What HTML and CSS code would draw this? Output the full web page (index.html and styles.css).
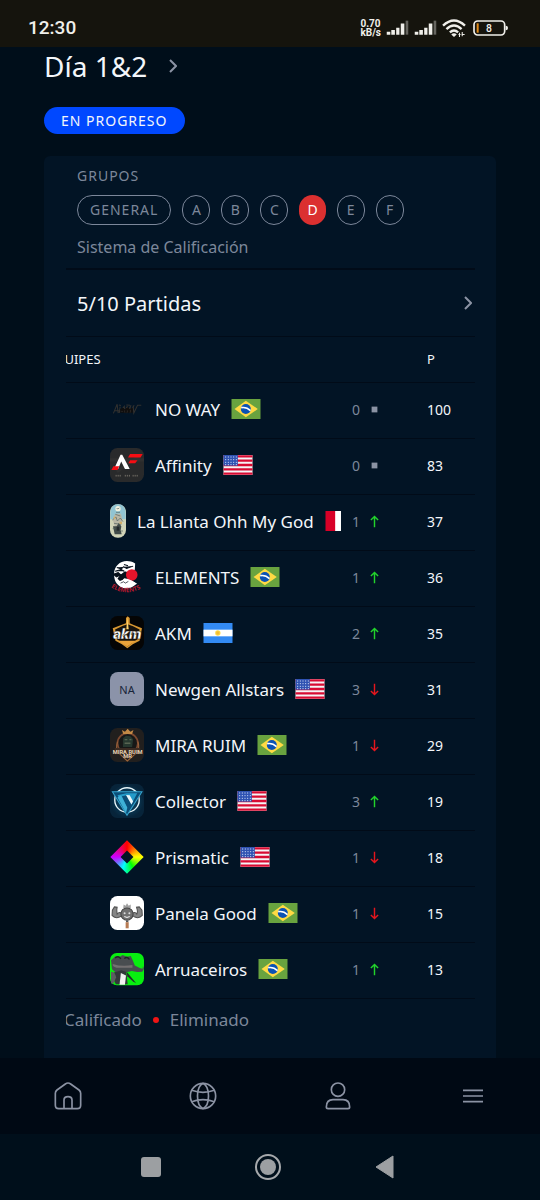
FILE: index.html
```html
<!DOCTYPE html>
<html lang="es">
<head>
<meta charset="utf-8">
<meta name="viewport" content="width=device-width, initial-scale=1">
<title>Día 1&amp;2</title>
<link rel="stylesheet" href="styles.css">
</head>
<body>
<svg class="defs" aria-hidden="true">
  <defs>
    <symbol id="br" viewBox="0 0 87 60"><path fill="#69a33f" d="M0 0h87v60H0z"/><path fill="#ffda44" d="M43 5 79 30 43 55 9 30z"/><circle cx="43" cy="30" r="15" fill="#0b52b4"/><path d="M29 26q16-3 28 9" fill="none" stroke="#fff" stroke-width="5"/></symbol>
    <symbol id="us" viewBox="0 0 87 60"><path fill="#f5f3f5" d="M0 0h87v60H0z"/><path d="M0 4h87M0 17h87M0 30h87M0 43h87M0 56h87" stroke="#d80b32" stroke-width="7"/><path fill="#2e52b2" d="M0 0h43v32H0z"/><path d="M5 6h36M5 14h36M5 22h36M5 29h36" stroke="#dce5fa" stroke-width="3" stroke-dasharray="3 5"/></symbol>
    <symbol id="ar" viewBox="0 0 87 60"><path fill="#338af3" d="M0 0h87v60H0z"/><path fill="#fff" d="M0 20h87v20H0z"/><circle cx="43" cy="30" r="8" fill="#ffda44"/><circle cx="43" cy="30" r="5" fill="#f5bb36"/></symbol>
    <symbol id="pe" viewBox="0 0 87 60"><path fill="#d80027" d="M0 0h87v60H0z"/><path fill="#fff" d="M29 0h29v60H29z"/></symbol>
    <symbol id="up" viewBox="0 0 24 36"><path d="M12 34V4M2 14 12 4l10 10" fill="none" stroke="#22d32b" stroke-width="4"/></symbol>
    <symbol id="down" viewBox="0 0 24 36"><path d="M12 2v30M2 22l10 10 10-10" fill="none" stroke="#e5161d" stroke-width="4"/></symbol>
    <symbol id="same" viewBox="0 0 24 36"><path d="M4 10h16v16H4z" fill="#8b93a4"/></symbol>
    <symbol id="chevron" viewBox="0 0 8 14"><path d="m1 1 6 6-6 6" fill="none" stroke="currentColor" stroke-width="2"/></symbol>
    <symbol id="signal" viewBox="0 0 68 46"><path d="M1 36h11v9H1zM15 31h11v14H15zM30 24h10v21H30zM44 11h11v34H44z" fill="#f0efea"/><path d="M59 2h8v43h-8z" fill="#66655f"/></symbol>
  </defs>
</svg>

<header class="status">
  <time class="clock">12:30</time>
  <div class="indicators">
    <div class="speed"><span>0.70</span><span>kB/s</span></div>
    <svg class="signal"><use href="#signal"/></svg>
    <svg class="signal"><use href="#signal"/></svg>
    <svg class="wifi" viewBox="0 0 70 52" fill="none" stroke="#f0efea" stroke-width="7"><path d="M3 19q32-30 64 0M13 29q22-20 44 0M23 39q12-11 24 0"/><path d="m27 45 8 7 8-7q-8-7-16 0z" fill="#f0efea" stroke="none"/><path d="M51 40v12M59 38v12M48 45h6M57 45h9" stroke-width="3"/></svg>
    <svg class="battery" viewBox="0 0 105 48"><rect x="3" y="3" width="92" height="42" rx="11" fill="none" stroke="#f0efea" stroke-width="5"/><path d="M98 17q7 0 7 7t-7 7z" fill="#f0efea"/><path d="M11 10h6v28h-6z" fill="#e18a18"/><text x="48" y="35" class="battery-level">8</text></svg>
  </div>
</header>

<main class="page">
  <h1 class="title"><button class="title-button">Día 1&amp;2 <svg class="chevron-title"><use href="#chevron"/></svg></button></h1>
  <span class="badge">EN PROGRESO</span>

  <section class="card">
    <div class="groups">
      <h2 class="label">GRUPOS</h2>
      <div class="chips">
        <button class="chip">GENERAL</button>
        <button class="chip">A</button>
        <button class="chip">B</button>
        <button class="chip">C</button>
        <button class="chip active" aria-pressed="true">D</button>
        <button class="chip">E</button>
        <button class="chip">F</button>
      </div>
      <p class="system">Sistema de Calificación</p>
    </div>
    <button class="matches">5/10 Partidas <svg class="chevron-row"><use href="#chevron"/></svg></button>

    <div class="scroller">
      <table class="standings">
        <colgroup><col><col class="col-change"><col class="col-points"></colgroup>
        <thead><tr><th scope="col">EQUIPES</th><th></th><th scope="col">P</th></tr></thead>
        <tbody>
          <tr><td><div class="team">
            <svg class="logo" viewBox="0 0 100 100"><g fill="none" stroke="#32312f" stroke-width="3"><path d="m10 63 11-27 3 26M13 55h14M30 43l-3 18 15-19 2 19 5-18M52 42l-3 20 13-23M60 40l-2 22 13-23M68 40l2 22 11-23h11M26 38l6 2M48 38l11 1"/></g><path d="m30 50 8-4 5 5 9-6 6 5 9-4v15H30z" fill="#100e0d"/><path d="M33 57h5M43 54v6M51 54v6M60 52v8" stroke="#32312f" stroke-width="2"/></svg>
            <span>NO WAY</span><svg class="flag"><use href="#br"/></svg></div></td>
            <td><div class="change">0<svg class="trend"><use href="#same"/></svg></div></td><td>100</td></tr>
          <tr><td><div class="team">
            <svg class="logo" viewBox="0 0 100 100"><rect width="100" height="100" rx="22" fill="#292a2b"/><path d="M0 35h100M20 70l70-50" stroke="#303030" stroke-width="9"/><path d="M31 20 12 62h12l9-22 11 22h14L36 20z" fill="#fff"/><path d="M59 18h37l-6 10H53zM59 36h22l-7 9H54zM10 54h17l-5 11H4z" fill="#f50d13"/><path d="M18 79v5M24 79v5M30 79v5M45 79v5M51 79v5M57 79v5M68 79v5M74 79v5M80 79v5" stroke="#968f83" stroke-width="2"/></svg>
            <span>Affinity</span><svg class="flag"><use href="#us"/></svg></div></td>
            <td><div class="change">0<svg class="trend"><use href="#same"/></svg></div></td><td>83</td></tr>
          <tr><td><div class="team">
            <svg class="logo board" viewBox="0 0 48 100"><rect width="48" height="100" rx="23" fill="#d0d3b7"/><path d="M1 28Q1 0 24 0t23 28v17H1z" fill="#91c4d2"/><circle cx="24" cy="13" r="8" fill="#f2f1df"/><path d="M15 28h18l4 19-8 26H16l-7-25z" fill="#b9b7a6"/><path d="M9 66h11l6-10 8 10-2 12 3 12H14z" fill="#414b49"/><path d="m7 47 11-9 4 12 9-9 8 11M16 30l15 5M12 57l22 3M18 24h12M8 73h8M33 80h6M20 11l3 3 5-3" stroke="#51605f" stroke-width="2" fill="none"/><path d="M11 37h5v7h-5zM29 52h7v7h-7z" fill="#d3ae68"/><path d="M20 67h8v12h-8z" fill="#22272b"/></svg>
            <span>La Llanta Ohh My God</span><svg class="flag"><use href="#pe"/></svg></div></td>
            <td><div class="change">1<svg class="trend"><use href="#up"/></svg></div></td><td>37</td></tr>
          <tr><td><div class="team">
            <svg class="logo" viewBox="0 0 100 100"><path d="M74 10C43-8 11 11 12 43c0 23 12 36 32 41 18-1 27-6 33-15L60 58 33 43l25-8 15-6z" fill="#fff"/><path d="m20 22 13 4 7-6 9 5 19-7M10 42l14-5 8 7-13 6zM15 33l18-5 9 5M41 13l12 4" fill="#07101b" stroke="#07101b" stroke-width="3"/><path d="M22 55l7-10 14-11q9-2 17 8l3 15-12 4-10-4-12 5z" fill="#07101b"/><circle cx="64" cy="44" r="17" fill="#e6142b"/><path d="m22 70 13-9 7-7 11 2 12 5 15 9-13 6H35z" fill="#fff"/><path d="m31 68 9-4 5 4 9-5" fill="none" stroke="#07101b" stroke-width="2"/><path id="arc" d="M3 80q46 30 94 0" fill="none"/><text class="logo-elements" fill="#b8182e"><textPath href="#arc">ELEMENTS</textPath></text></svg>
            <span>ELEMENTS</span><svg class="flag"><use href="#br"/></svg></div></td>
            <td><div class="change">1<svg class="trend"><use href="#up"/></svg></div></td><td>36</td></tr>
          <tr><td><div class="team">
            <svg class="logo" viewBox="0 0 100 100"><rect width="100" height="100" rx="22" fill="#050505"/><path d="m8 36 27-10 12-5V6l5-5 6 5v15l10 5 26 10-7 37-20 10-16 12-16-12-19-10z" fill="#d99832"/><path d="m15 40 23-11 14-5 16 6 19 10-5 28-15 10-16 12-14-11-16-10z" fill="#17120c"/><path d="m51 3-3 36h7z" fill="#ffd36b"/><path d="M25 73h54L64 81l-13 9-15-9z" fill="#eba33a"/><text x="51" y="67" class="logo-akm">akm</text></svg>
            <span>AKM</span><svg class="flag"><use href="#ar"/></svg></div></td>
            <td><div class="change">2<svg class="trend"><use href="#up"/></svg></div></td><td>35</td></tr>
          <tr><td><div class="team">
            <span class="logo initials">NA</span>
            <span>Newgen Allstars</span><svg class="flag"><use href="#us"/></svg></div></td>
            <td><div class="change">3<svg class="trend"><use href="#down"/></svg></div></td><td>31</td></tr>
          <tr><td><div class="team">
            <svg class="logo" viewBox="0 0 100 100"><rect width="100" height="100" rx="22" fill="#211f1e"/><circle cx="52" cy="45" r="30" fill="#171817" stroke="#7c4930" stroke-width="5"/><path d="m35 6 9 5 8-9 8 9 9-5-4 12H39z" fill="#c48a46"/><path d="m38 30 9-7 13 1 8 9-3 23H38z" fill="#27382f"/><path d="M43 34h8M57 34h6M43 45h17" stroke="#586451" stroke-width="4"/><path d="M22 40q-7 22 4 34l25 23 26-23q12-15 5-34" fill="none" stroke="#9d653b" stroke-width="3"/><path d="M14 59h75v18H67L52 92 38 77H14z" fill="#3b2b22"/><text x="52" y="75" class="logo-mira">MIRA RUIM</text><text x="52" y="89" class="logo-mira">MR</text></svg>
            <span>MIRA RUIM</span><svg class="flag"><use href="#br"/></svg></div></td>
            <td><div class="change">1<svg class="trend"><use href="#down"/></svg></div></td><td>29</td></tr>
          <tr><td><div class="team">
            <svg class="logo" viewBox="0 0 100 100"><defs><radialGradient id="glow"><stop stop-color="#0c557a"/><stop offset="1" stop-color="#07243a"/></radialGradient></defs><rect width="100" height="100" rx="22" fill="url(#glow)"/><circle cx="50" cy="47" r="36" fill="none" stroke="#e7f5f9" stroke-width="4"/><path d="M7 23h87L50 92z" fill="#0b4f78" stroke="#35a5cf" stroke-width="3"/><path d="m22 33 22 37 6-1-15-33 14-3 14 27 17-33H48z" fill="#249bc9"/><path d="m47 32 11 1 10 18-5 9z" fill="#eaf7fb"/><path d="m32 33 19 37-4 15-25-45z" fill="#3fb1d6"/></svg>
            <span>Collector</span><svg class="flag"><use href="#us"/></svg></div></td>
            <td><div class="change">3<svg class="trend"><use href="#up"/></svg></div></td><td>19</td></tr>
          <tr><td><div class="team">
            <span class="logo prism"></span>
            <span>Prismatic</span><svg class="flag"><use href="#us"/></svg></div></td>
            <td><div class="change">1<svg class="trend"><use href="#down"/></svg></div></td><td>18</td></tr>
          <tr><td><div class="team">
            <svg class="logo" viewBox="0 0 100 100"><rect width="100" height="100" rx="22" fill="#fff"/><path d="m39 35 1-10 6 4 4-8 5 8 6-4v11z" fill="#a0a0a0"/><path d="M35 50q-9-4-14 3-1-8-1-13l1-7-8-1-6 10-1 15q8 10 22 5l10-5M66 50q9-4 13 3 3-7 1-13l-2-7 8-1 8 10 1 15q-9 10-22 5l-8-5" fill="#868686" stroke="#505050" stroke-width="3"/><circle cx="50" cy="53" r="18" fill="#707070" stroke="#444" stroke-width="3"/><circle cx="43" cy="51" r="3" fill="#ddd"/><circle cx="57" cy="51" r="3" fill="#ddd"/><path d="m42 60 8 3 8-3" stroke="#eee" stroke-width="3" fill="none"/><path d="M47 72h7v5h-7z" fill="#555"/><path d="M46 77h9v18h-9z" fill="#b77a52"/></svg>
            <span>Panela Good</span><svg class="flag"><use href="#br"/></svg></div></td>
            <td><div class="change">1<svg class="trend"><use href="#down"/></svg></div></td><td>15</td></tr>
          <tr><td><div class="team">
            <svg class="logo" viewBox="0 0 100 100"><rect y="3" width="100" height="95" rx="20" fill="#08ee10"/><path d="M3 24 17 12l12 2 8-5 13 5 11-2 7 15 5 13 16 8 7 1 1-8 3 8-5 9-15 1-16-3-25 6-22-2-11-9z" fill="#494d50"/><path d="M15 18q9-9 17 2M42 19q9-7 15 3" fill="none" stroke="#1d2424" stroke-width="4"/><path d="M8 35q28 9 58 3v8H19Q6 43 8 35z" fill="#747071"/><path d="m12 60 22-6 14 5 4 36H17L9 78z" fill="#313739"/><path d="m32 62 15 7-3 27H28z" fill="#f1f1f1"/><path d="m49 58 28 34-9-5-17-16z" fill="#252a2d"/><path d="M3 58q12-1 15 17L10 93H3z" fill="#5b5e60"/></svg>
            <span>Arruaceiros</span><svg class="flag"><use href="#br"/></svg></div></td>
            <td><div class="change">1<svg class="trend"><use href="#up"/></svg></div></td><td>13</td></tr>
        </tbody>
      </table>
      <ul class="legend"><li class="qualified">Calificado</li><li class="eliminated">Eliminado</li></ul>
    </div>
  </section>
</main>

<nav class="tabs">
  <a href="#" aria-label="Inicio"><svg viewBox="0 0 84 84"><path d="M4 34q0-6 5-10L34 6q8-6 16 0l25 18q5 4 5 10v36q0 10-10 10H14Q4 80 4 70zM30 80V54q0-10 12-10t12 10v26"/></svg></a>
  <a href="#" aria-label="Explorar"><svg viewBox="0 0 84 84"><circle cx="42" cy="42" r="38"/><path d="M42 4C20 15 20 69 42 80M42 4c22 11 22 65 0 76M8 25q34 12 68 0M8 59q34-12 68 0"/></svg></a>
  <a href="#" aria-label="Perfil"><svg viewBox="0 0 84 84"><circle cx="42" cy="23" r="20"/><path d="M7 75q0-22 20-22h30q20 0 20 22 0 5-5 5H12q-5 0-5-5z"/></svg></a>
  <a href="#" aria-label="Menú"><svg viewBox="0 0 84 84"><path d="M12 25h60M12 42h60M12 59h60"/></svg></a>
</nav>
<div class="system-keys">
  <button aria-label="Recientes"><svg viewBox="0 0 28 28"><rect x="4" y="4" width="20" height="20" rx="3" fill="#9c9fa2"/></svg></button>
  <button aria-label="Pantalla de inicio"><svg viewBox="0 0 28 28"><circle cx="14" cy="14" r="12" fill="none" stroke="#a6a9ac" stroke-width="2"/><circle cx="14" cy="14" r="8" fill="#9c9fa2"/></svg></button>
  <button aria-label="Atrás"><svg viewBox="0 0 28 28"><path d="M5 14 22 3v22z" fill="#9c9fa2" stroke="#9c9fa2" stroke-width="1" stroke-linejoin="round"/></svg></button>
</div>
</body>
</html>
```
FILE: styles.css
```css
* { box-sizing: border-box; }
body {
  margin: 0;
  min-height: 100vh;
  display: flex;
  flex-direction: column;
  background: #000e1a;
  color: #f3f6fa;
  font-family: "Noto Sans", sans-serif;
  font-size: 14px;
}
svg { display: block; flex: none; }
button { border: 0; padding: 0; background: none; color: inherit; font: inherit; cursor: pointer; }
.defs { position: absolute; width: 0; height: 0; }

.status {
  display: flex;
  align-items: center;
  justify-content: space-between;
  height: 47px;
  padding: 8px 32px 0 28px;
  background: #15140d;
  color: #f0efea;
  font-family: Roboto, sans-serif;
}
.clock { font-size: 19px; font-weight: 500; }
.indicators { display: flex; align-items: center; gap: 5px; }
.speed { display: flex; flex-direction: column; font-size: 10px; font-weight: 700; line-height: 9px; }
.signal { width: 23px; height: 15px; }
.wifi { width: 24px; height: 18px; }
.battery { width: 35px; height: 16px; margin-left: 2px; }
.battery-level { font-size: 31px; font-weight: 500; fill: #f0efea; text-anchor: middle; }

.page { flex: 1; display: flex; flex-direction: column; align-items: flex-start; padding: 0 44px; }
.title { margin: 0; font-size: 28px; font-weight: 400; line-height: 38px; }
.title-button { display: flex; align-items: center; gap: 22px; }
.chevron-title { width: 8px; height: 14px; color: #8b93a4; }
.badge {
  margin-top: 22px;
  padding: 0 18px 0 17px;
  border-radius: 14px;
  background: #0048ff;
  line-height: 27px;
  letter-spacing: 1px;
}
.card {
  flex: 1;
  align-self: stretch;
  margin-top: 22px;
  padding: 8px 21px 0 22px;
  border-radius: 6px 6px 0 0;
  background: #021425;
}
.groups { padding: 0 11px 10px; border-bottom: 2px solid #010b18; color: #7c879a; }
.label { margin: 0; font-size: 14px; font-weight: 400; line-height: 24px; letter-spacing: 1px; }
.chips { display: flex; gap: 11px; margin-top: 7px; }
.chip {
  min-width: 28px;
  height: 30px;
  padding: 0 8px 2px;
  border: 1px solid #7c879a;
  border-radius: 15px;
}
.chip:first-child { padding: 0 12px 2px; letter-spacing: 1px; }
.chip.active { min-width: 26px; border: 0; background: #db3030; color: #fff; }
.system { margin: 11px 0 0; font-size: 16px; line-height: 22px; }
.matches {
  display: flex;
  align-items: center;
  justify-content: space-between;
  width: 100%;
  height: 67px;
  padding: 0 3px 0 11px;
  border-bottom: 1px solid #010b18;
  font-size: 20px;
}
.chevron-row { width: 8px; height: 14px; color: #8b93a4; }

.scroller { overflow: hidden; }
.standings { width: calc(100% + 28px); margin-left: -28px; table-layout: fixed; border-collapse: collapse; }
.col-change { width: 75px; }
.col-points { width: 59px; }
.standings th, .standings td { padding: 0 0 2px 11px; border-bottom: 1px solid #010b18; text-align: left; font-weight: 400; }
.standings th { height: 45px; padding-bottom: 0; font-size: 13px; }
.standings th:first-child { padding-left: 9px; }
.standings td { height: 56px; }
.standings td:first-child { padding-left: 72px; }
.team { display: flex; align-items: center; gap: 11px; overflow: hidden; font-size: 17px; white-space: nowrap; }
.logo { width: 34px; height: 34px; flex: none; }
.board { width: 16px; }
.initials {
  display: flex;
  align-items: center;
  justify-content: center;
  border-radius: 8px;
  background: #8b93a9;
  color: #172338;
  font-size: 11px;
}
.prism {
  background: conic-gradient(#f00, #ff0 90deg, #0f0 150deg, #0ff 200deg, #c0f 270deg, #f00);
  clip-path: polygon(evenodd, 50% 1%, 99% 50%, 50% 99%, 1% 50%, 50% 1%, 50% 31%, 31% 50%, 50% 69%, 69% 50%, 50% 31%);
}
.flag { width: 30px; height: 20px; }
.logo-elements { font-size: 18px; font-weight: 700; }
.logo-akm { font: italic 900 44px Roboto, sans-serif; fill: #fff; stroke: #211507; stroke-width: 1px; text-anchor: middle; }
.logo-mira { font: 700 17px Roboto, sans-serif; fill: #e3d1b5; text-anchor: middle; }
.change { display: flex; align-items: center; gap: 10px; color: #7c879a; }
.trend { width: 9px; height: 13px; }
.legend { display: flex; gap: 11px; margin: 0 0 0 -19px; padding: 9px 0 0; list-style: none; color: #7c879a; font-size: 17px; line-height: 24px; }
.legend li { display: flex; align-items: center; gap: 11px; }
.legend li::before { content: ""; width: 6px; height: 6px; border-radius: 50%; background: #22d32b; }
.legend .eliminated::before { background: #ef1515; }

.tabs { display: grid; grid-template-columns: repeat(4, 1fr); height: 76px; background: #000914; }
.tabs a { display: grid; place-items: center; }
.tabs svg { width: 28px; height: 28px; fill: none; stroke: #8b93a4; stroke-width: 5; }
.system-keys { display: flex; justify-content: center; gap: 89px; height: 66px; padding-right: 5px; background: #000f1b; }
.system-keys svg { width: 28px; height: 28px; }
```
